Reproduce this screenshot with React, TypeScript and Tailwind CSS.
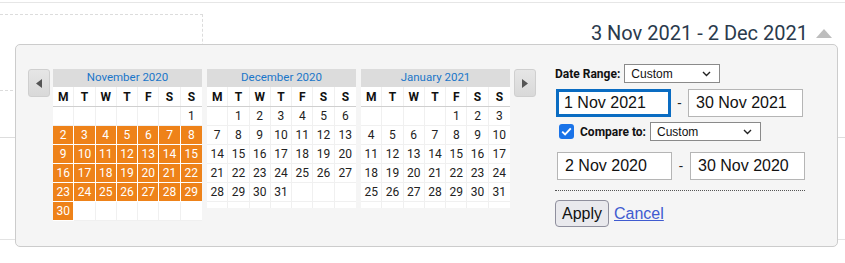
import React from 'react';

/** 달력 한 달 데이터 */
const MONTHS = [
  { key: 'nov', title: 'November 2020', offset: 6, days: 30, selFrom: 2, selTo: 30 },
  { key: 'dec', title: 'December 2020', offset: 1, days: 31, selFrom: 0, selTo: -1 },
  { key: 'jan', title: 'January 2021', offset: 4, days: 31, selFrom: 0, selTo: -1 },
] as const;

const WEEKDAYS = ['M', 'T', 'W', 'T', 'F', 'S', 'S'];

function buildRows(offset: number, days: number): (number | null)[][] {
  const cells: (number | null)[] = [];
  for (let i = 0; i < offset; i++) cells.push(null);
  for (let d = 1; d <= days; d++) cells.push(d);
  while (cells.length % 7 !== 0) cells.push(null);
  const rows: (number | null)[][] = [];
  for (let i = 0; i < cells.length; i += 7) rows.push(cells.slice(i, i + 7));
  return rows;
}

function Month({ title, offset, days, selFrom, selTo }: { title: string; offset: number; days: number; selFrom: number; selTo: number }) {
  const rows = buildRows(offset, days);
  return (
    <div className="w-[149px] flex flex-col">
      {/* 월 제목 */}
      <div className="h-[18px] bg-[#dcdcdc] text-[#1a76c9] text-[11.5px] flex items-center justify-center">{title}</div>

      {/* 요일 */}
      <div className="grid grid-cols-7 bg-white border-b border-[#cfcfcf] h-[20px]">
        {WEEKDAYS.map((w, i) => (
          <div key={i} className={`flex items-center justify-center text-[12px] font-bold text-[#111] ${i < 6 ? 'border-r border-[#f0f0f0]' : ''}`}>
            {w}
          </div>
        ))}
      </div>

      {/* 날짜 */}
      {rows.map((row, r) => (
        <div key={r} className="grid grid-cols-7 h-[19px]">
          {row.map((d, i) => {
            const selected = d !== null && d >= selFrom && d <= selTo;
            return (
              <div
                key={i}
                className={`flex items-center justify-center text-[12px] border-b ${i < 6 ? 'border-r' : ''} ${
                  selected ? 'bg-[#ee8219] text-white border-white' : 'bg-white text-[#222] border-[#f0f0f0]'
                }`}
              >
                {d ?? ''}
              </div>
            );
          })}
        </div>
      ))}

      {/* 빈 마지막 줄 */}
      {rows.length < 6 && (
        <div className="grid grid-cols-7 h-[6px]">
          {WEEKDAYS.map((_, i) => (
            <div key={i} className={`bg-white ${i < 6 ? 'border-r border-[#f0f0f0]' : ''}`} />
          ))}
        </div>
      )}
    </div>
  );
}

function NavButton({ dir }: { dir: 'prev' | 'next' }) {
  return (
    <button className="w-[22px] h-[28px] rounded-[3px] border border-[#cfcfcf] bg-gradient-to-b from-[#e6e6e6] to-[#d9d9d9] flex items-center justify-center">
      <svg width="6" height="9" viewBox="0 0 6 9">
        {dir === 'prev' ? <polygon points="6,0 6,9 0,4.5" fill="#555" /> : <polygon points="0,0 0,9 6,4.5" fill="#555" />}
      </svg>
    </button>
  );
}

function Select({ width }: { width: string }) {
  return (
    <div className={`${width} h-[19px] bg-white border border-[#8a8a8a] flex items-center justify-between pl-[6px] pr-[8px] text-[12px] text-[#111]`} style={{ fontFamily: '"Liberation Sans", Arial, sans-serif' }}>
      <span>Custom</span>
      <svg width="9" height="6" viewBox="0 0 9 6" fill="none">
        <path d="M1 1l3.5 3.5L8 1" stroke="#222" strokeWidth="1.4" />
      </svg>
    </div>
  );
}

function DateInput({ value, focused = false }: { value: string; focused?: boolean }) {
  return (
    <div
      className={`w-[115px] h-[28px] bg-white flex items-center text-[16px] text-[#111] ${
        focused ? 'border-[3px] border-[#0a6cc2] pl-[5px]' : 'border border-[#b5b5b5] pl-[7px]'
      }`}
      style={{ fontFamily: '"Liberation Sans", Arial, sans-serif' }}
    >
      {value}
    </div>
  );
}

export default function App() {
  return (
    <div className="relative w-[845px] h-[263px] bg-white overflow-hidden" style={{ fontFamily: 'Roboto, "Liberation Sans", sans-serif' }}>
      {/* 배경 페이지 */}
      <div className="h-[2px]" />
      <div className="h-px bg-[#e6e6e6]" />
      <div className="flex">
        <div className="w-[203px] h-[77px] mt-[11px] border-t border-r border-b border-dashed border-[#dcdcdc]" />
        <div className="flex-1 flex justify-end items-start pt-[17px] pr-[13px] gap-[8px]">
          <span className="text-[20px] leading-[26px] text-[#2a3a4c]">3 Nov 2021 - 2 Dec 2021</span>
          <svg width="16" height="9" viewBox="0 0 16 9" className="mt-[9px]">
            <polygon points="0,9 16,9 8,0" fill="#bdbdbd" />
          </svg>
        </div>
      </div>
      <div className="h-[46px]" />
      <div className="h-px bg-[#dddddd]" />
      <div className="h-[101px]" />
      <div className="h-px bg-[#e3e3e3]" />

      {/* 날짜 선택 팝업 */}
      <div className="absolute left-[15px] top-[44px] w-[823px] h-[203px] bg-[#f5f5f5] border border-[#cccccc] rounded-[5px] pl-[12px] pt-[24px] flex">
        <div className="flex items-start">
          <NavButton dir="prev" />
          <div className="flex gap-[5px] ml-[3px]">
            {MONTHS.map((m) => (
              <Month key={m.key} title={m.title} offset={m.offset} days={m.days} selFrom={m.selFrom} selTo={m.selTo} />
            ))}
          </div>
          <div className="ml-[4px]">
            <NavButton dir="next" />
          </div>
        </div>

        {/* 우측 설정 */}
        <div className="ml-[19px] -mt-[5px] w-[250px] flex flex-col">
          <div className="flex items-center gap-[4px] h-[19px]">
            <span className="text-[12px] font-bold text-[#111]">Date Range:</span>
            <Select width="w-[96px]" />
          </div>

          <div className="flex items-center mt-[6px]">
            <div className="ml-px">
              <DateInput value="1 Nov 2021" focused />
            </div>
            <span className="w-[17px] text-center text-[14px] text-[#222]">-</span>
            <DateInput value="30 Nov 2021" />
          </div>

          <div className="flex items-center mt-[5px] ml-[4px] h-[19px]">
            <div className="w-[15px] h-[15px] rounded-[3px] bg-[#1a73e8] flex items-center justify-center">
              <svg width="11" height="9" viewBox="0 0 11 9" fill="none">
                <path d="M1.2 4.6l2.9 2.9L9.8 1.4" stroke="white" strokeWidth="1.9" />
              </svg>
            </div>
            <span className="ml-[6px] text-[12px] font-bold text-[#111]">Compare to:</span>
            <div className="ml-[4px]">
              <Select width="w-[111px]" />
            </div>
          </div>

          <div className="flex items-center mt-[11px] ml-[2px]">
            <DateInput value="2 Nov 2020" />
            <span className="w-[18px] text-center text-[14px] text-[#222]">-</span>
            <DateInput value="30 Nov 2020" />
          </div>

          <div className="mt-[10px] border-t border-dotted border-[#555] w-[250px]" />

          <div className="flex items-center mt-[9px]">
            <button className="w-[54px] h-[27px] rounded-[4px] border border-[#8f8f9d] bg-[#e9e9ed] text-[16px] text-[#111]" style={{ fontFamily: '"Liberation Sans", Arial, sans-serif' }}>
              Apply
            </button>
            <a className="ml-[5px] text-[16px] text-[#3f5bd0] underline" style={{ fontFamily: '"Liberation Sans", Arial, sans-serif' }}>
              Cancel
            </a>
          </div>
        </div>
      </div>
    </div>
  );
}
